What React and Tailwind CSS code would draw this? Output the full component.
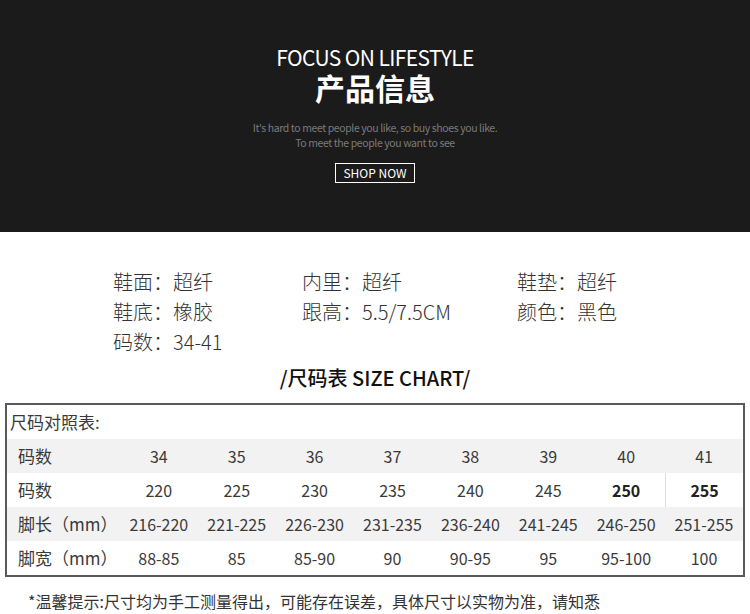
import React from 'react';

const FONT = "font-['Noto_Sans_CJK_SC','Noto_Sans',sans-serif]";

const specs = [
  ['鞋面：超纤', '内里：超纤', '鞋垫：超纤'],
  ['鞋底：橡胶', '跟高：5.5/7.5CM', '颜色：黑色'],
  ['码数：34-41', '', ''],
];

const rows = [
  { label: '码数', values: ['34', '35', '36', '37', '38', '39', '40', '41'], gray: true },
  { label: '码数', values: ['220', '225', '230', '235', '240', '245', '250', '255'], bold: [6, 7] },
  { label: '脚长（mm）', values: ['216-220', '221-225', '226-230', '231-235', '236-240', '241-245', '246-250', '251-255'], gray: true },
  { label: '脚宽（mm）', values: ['88-85', '85', '85-90', '90', '90-95', '95', '95-100', '100'] },
];

const App = () => {
  return (
    <div className={`w-[750px] h-[614px] bg-white overflow-hidden ${FONT}`}>
      {/* Banner */}
      <div className="h-[232px] bg-[#1b1b1b] flex flex-col items-center pt-[45px] text-white">
        <div className="text-[21px] leading-[24px] tracking-[-0.6px]">FOCUS ON LIFESTYLE</div>
        <div className="mt-[1px] text-[30px] leading-[34px] font-bold">产品信息</div>
        <div className="mt-[16px] text-[10.5px] leading-[15px] text-[#7a7a7a] tracking-[-0.4px]">
          It's hard to meet people you like, so buy shoes you like.
        </div>
        <div className="text-[10.5px] leading-[15px] text-[#7a7a7a] tracking-[-0.4px]">To meet the people you want to see</div>
        <div className="mt-[13px] w-[80px] h-[20px] border border-white flex items-center justify-center text-[12px] leading-none">
          SHOP NOW
        </div>
      </div>

      {/* Specs */}
      <div className="pt-[35px] pl-[113px] text-[20px] leading-[30px] text-[#333] font-light">
        {specs.map((r, i) => (
          <div key={i} className="flex">
            <div className="w-[189px]">{r[0]}</div>
            <div className="w-[215px]">{r[1]}</div>
            <div>{r[2]}</div>
          </div>
        ))}
      </div>

      <div className="mt-[6px] text-center text-[20px] leading-[30px] font-medium text-[#111]">/尺码表 SIZE CHART/</div>

      {/* Size table */}
      <div className="mt-[10px] ml-[5px] w-[740px] border-2 border-[#5a5a5a] text-[#3a3a3a]">
        <div className="h-[34px] flex items-center pl-[3px] text-[17px]">尺码对照表:</div>
        {rows.map((r, i) => (
          <div key={i} className={`h-[34px] flex items-center ${r.gray ? 'bg-[#f2f2f2]' : 'bg-white'}`}>
            <div className="w-[113px] pl-[11px] text-[17px] whitespace-nowrap">{r.label}</div>
            {r.values.map((v, j) => (
              <div
                key={j}
                className={`w-[78px] h-full flex items-center justify-center text-[16px] ${
                  r.bold && r.bold.includes(j) ? 'font-bold text-[#222]' : ''
                } ${r.bold && j === 7 ? 'border-l border-[#d8dde6]' : ''}`}
              >
                {v}
              </div>
            ))}
          </div>
        ))}
      </div>

      <div className="mt-[14px] pl-[28px] text-[16px] leading-[20px] text-[#333] whitespace-nowrap">
        *温馨提示:尺寸均为手工测量得出，可能存在误差，具体尺寸以实物为准，请知悉
      </div>
    </div>
  );
};

export default App;
